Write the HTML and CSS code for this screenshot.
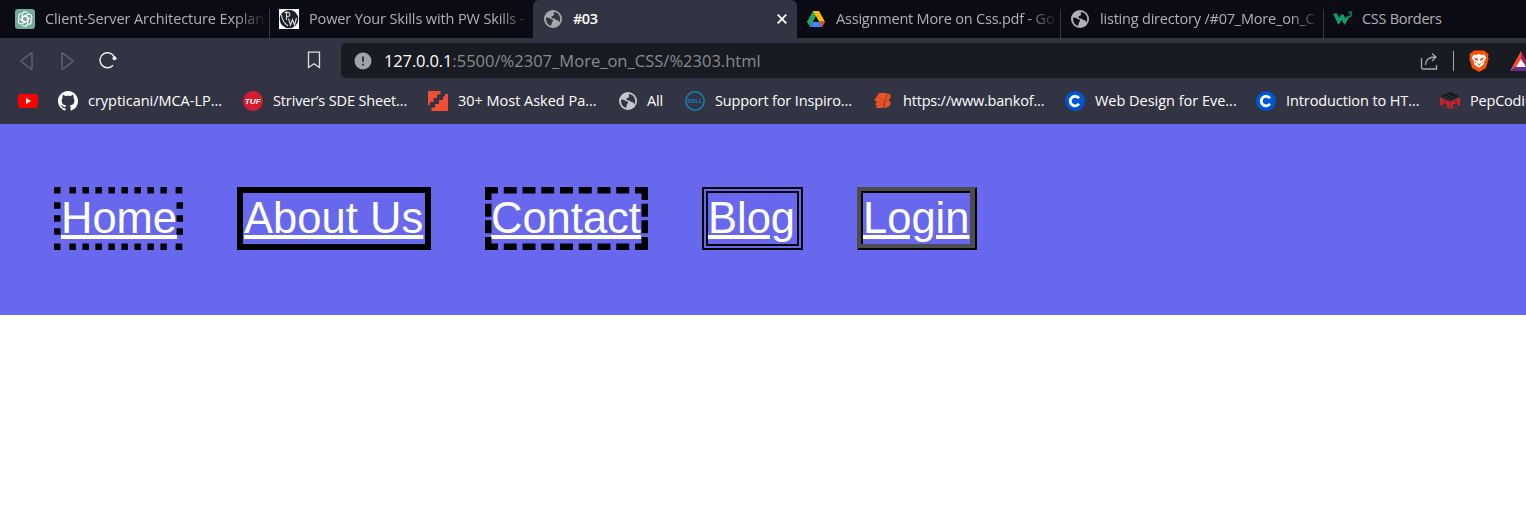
FILE: index.html
```html
<!DOCTYPE html>
<html lang="en">
<head>
<meta charset="utf-8">
<title>#03</title>
<link rel="stylesheet" href="styles.css">
</head>
<body>
<svg class="defs" width="0" height="0" aria-hidden="true">
  <symbol id="globe" viewBox="0 0 20 20"><circle cx="10" cy="10" r="9" fill="currentColor"/><path d="M3 8.500c2 .2 3.200.2 4.200 1.200.8.800 1.800.3 2.500 1 .7.800 0 1.600-.5 2.200-.6.700-.3 2-1.200 3.900C5 16 2.800 13.500 3 8.500zM11 3c3.500.2 6.200 3.200 6.200 7 0 1.500-.4 2.500-.9 3.400-.6-1.600-1.300-2.400-2.800-2.400-1.200 0-1.100-1.500-2.300-1.500-1.500 0-2.800-.3-2.800-1.500 0-1.400 1.500-1 2.300-1.600.9-.8-.5-1.500.3-3.400z" fill="var(--hole)"/></symbol>
  <symbol id="coursera" viewBox="0 0 20 20"><circle cx="10" cy="10" r="10" fill="#0056d2"/><path d="M14 7.300A4.800 4.800 0 1 0 14 12.800" fill="none" stroke="#fff" stroke-width="2.800"/></symbol>
</svg>
<header class="browser">
  <div class="tabs">
    <div class="tab">
      <svg class="icon" viewBox="0 0 20 20"><rect width="20" height="20" rx="3" fill="#74aa9c"/><g fill="none" stroke="#fff" stroke-width="1.100"><path id="petal" d="M7.300 9V5.600a3 3 0 0 1 5.600-1.300M7.300 8.500l3-1.700 3.500 2"/><use href="#petal" transform="rotate(60 10 10)"/><use href="#petal" transform="rotate(120 10 10)"/><use href="#petal" transform="rotate(180 10 10)"/><use href="#petal" transform="rotate(240 10 10)"/><use href="#petal" transform="rotate(300 10 10)"/></g></svg>
      <span class="title fade">Client-Server Architecture Explan</span>
    </div>
    <div class="tab second">
      <svg class="icon" viewBox="0 0 20 20"><path fill="#fff" d="M0 0h20v20H0z"/><circle cx="10" cy="10" r="9.300" fill="#1b2225"/><path d="M7.500 11V3.500M5.500 3.600c6-2 7.500 4.200 2 4.200M2.500 6c.5 5 3 8.500 6.500 11M9.500 9.500l2 6.500 2-5.500 2 5.500 2-7" fill="none" stroke="#d8dadb" stroke-width="1.100"/></svg>
      <span class="title fade">Power Your Skills with PW Skills -</span>
    </div>
    <div class="tab active">
      <svg class="icon"><use href="#globe"/></svg>
      <span class="title">#03</span>
      <svg class="close" viewBox="0 0 10 10"><path d="m.7.700 8.600 8.600m0-8.600L.7 9.300" stroke="#fff" stroke-width="1.800"/></svg>
    </div>
    <div class="tab fourth">
      <svg class="icon" viewBox="0 0 20 20"><path d="M7 2h6L4 18l-3-5.200z" fill="#22a565"/><path d="M7 2h6l6 10.800h-6z" fill="#ffba00"/><path d="M7 12.800h12L16 18H4z" fill="#4285f4"/><path d="M13 12.800h6L16 18z" fill="#ea4335"/><path d="m10 7.500 3 5.300H7z" fill="#0b0b15"/></svg>
      <span class="title fade">Assignment More on Css.pdf - Go</span>
    </div>
    <div class="tab">
      <svg class="icon"><use href="#globe"/></svg>
      <span class="title fade">listing directory /#07_More_on_C</span>
    </div>
    <div class="tab w3">
      <svg class="icon" viewBox="0 0 20 20"><path d="M0 4.500h4l2.200 4.800L8 5.500h2.500l2 4 1-2h3L11.600 16 8.700 10.800 5.500 16z" fill="#0f9d67"/><path d="M15.500 3h3l-1.500 2c2 0 2 2.500-.2 2.500-.8 0-1.200-.2-1.500-.6" fill="none" stroke="#0f9d67" stroke-width="1.100"/></svg>
      <span class="title">CSS Borders</span>
    </div>
  </div>
  <div class="toolbar">
    <svg class="back" viewBox="0 0 14 18"><path d="M12 1.500v15c0 .6-.5.700-1 .4L1.500 9.700c-.5-.4-.5-.8 0-1.200L11 1.200c.5-.4 1-.3 1 .3z"/></svg>
    <svg class="forward" viewBox="0 0 14 18"><path d="M2 1.500v15c0 .6.5.700 1 .4l9.500-7.200c.5-.4.5-.8 0-1.200L3 1.200c-.5-.4-1-.3-1 .3z"/></svg>
    <svg class="reload" viewBox="0 0 18 18"><path d="M14.100 14.200A7.500 7.500 0 1 1 15.500 6.500" fill="none" stroke="#f1f1f4" stroke-width="1.400"/><circle cx="15.500" cy="7.200" r="2" fill="#f1f1f4"/></svg>
    <svg class="mark" viewBox="0 0 14 18"><path d="M1.500 1.200h11v15.300L7 12.700l-5.500 3.800z" fill="none" stroke="#e0e0e4" stroke-width="1.300"/></svg>
    <div class="address">
      <svg class="info" viewBox="0 0 18 18"><circle cx="9" cy="9" r="8.500" fill="#a1a3ab"/><path d="M9 4.500v5.300M9 11.700v1.800" stroke="#181b21" stroke-width="1.600"/></svg>
      <span class="url"><b>127.0.0.1</b>:5500/%2307_More_on_CSS/%2303.html</span>
      <svg class="share" viewBox="0 0 18 18"><path d="M1.500 6v9.500q0 1.500 1.500 1.500h13.500v-4M5.500 13c0-5 3-8 10-8M12 1.500 16 5l-4 4" fill="none" stroke="#a8a9ae" stroke-width="1.300"/></svg>
      <i class="divider"></i>
      <svg class="lion" viewBox="0 0 20 22"><path d="m5 .5-3 2.300-1.700 2 .9 2L.3 8.500 3 18l7 4 7-4 2.700-9.500-.9-1.700.9-2-1.700-2L15 .5z" fill="#fb5007"/><path d="m5 4.500 2.500.5L10 4l2.500 1 2.500-.5 2.300 3.300-2.500 4.200.4 2L10 18l-5.200-4 .4-2-2.500-4.200z" fill="#fff"/><path d="m5 7.500 3.500.7.500 3L6 9.500zm10 0-3.500.7-.5 3 3-1.700zM7.500 13l2.500 1 2.500-1-2.500 2.500zM6.200 11l1 2-1 .5zm7.600 0-1 2 1 .5z" fill="#fb5007"/></svg>
      <svg class="bat" viewBox="0 0 22 20"><path d="M11 0 0 20l11-7z" fill="#ff4724"/><path d="M11 0v13l11 7z" fill="#9e1f63"/><path d="m0 20 6-4.500h10l6 4.500z" fill="#662d91"/><path d="m11 8 5 8H6z" fill="#fff"/></svg>
    </div>
  </div>
  <div class="bookmarks">
    <div class="bookmark"><svg class="icon" viewBox="0 0 20 20"><rect y="3" width="20" height="14" rx="3" fill="#f00"/><path d="m8 7 5 3-5 3z" fill="#fff"/></svg></div>
    <div class="bookmark b1"><svg class="icon" viewBox="0 0 16 16"><path fill="#fff" d="M8 0C3.580 0 0 3.580 0 8c0 3.540 2.290 6.530 5.470 7.590.4.070.55-.17.55-.38 0-.19-.01-.82-.01-1.490-2.010.37-2.530-.49-2.690-.94-.09-.23-.48-.94-.82-1.130-.28-.15-.68-.52-.01-.53.63-.01 1.080.58 1.230.82.72 1.210 1.870.87 2.330.66.070-.52.28-.87.51-1.070-1.780-.2-3.640-.89-3.640-3.950 0-.87.31-1.590.82-2.150-.08-.2-.36-1.020.08-2.120 0 0 .67-.21 2.200.82.64-.18 1.320-.27 2-.27s1.360.09 2 .27c1.530-1.040 2.200-.82 2.200-.82.44 1.100.16 1.920.08 2.120.51.56.82 1.270.82 2.150 0 3.070-1.870 3.750-3.650 3.950.29.25.54.73.54 1.480 0 1.070-.01 1.930-.01 2.200 0 .21.15.46.55.38A8.010 8.010 0 0 0 16 8c0-4.420-3.580-8-8-8z"/></svg><span>crypticani/MCA-LP...</span></div>
    <div class="bookmark b2"><svg class="icon" viewBox="0 0 20 20"><circle cx="10" cy="10" r="10" fill="#d41c32"/><text class="tuf" x="1.800" y="12.600" textLength="16" lengthAdjust="spacingAndGlyphs">TUF</text></svg><span>Striver’s SDE Sheet...</span></div>
    <div class="bookmark b3"><svg class="icon" viewBox="0 0 20 20"><path d="M0 0h12.500v3.500H9V7H5.500v4H2v3H0zM20 3v17H3.500v-3.500H7V13h4V9h4V5.500h2V3z" fill="#f34e35"/></svg><span>30+ Most Asked Pa...</span></div>
    <div class="bookmark b4"><svg class="icon"><use href="#globe"/></svg><span>All</span></div>
    <div class="bookmark b5"><svg class="icon" viewBox="0 0 20 20"><circle cx="10" cy="10" r="9.200" fill="none" stroke="#1282bd" stroke-width="1.500"/><text class="dell" x="2.500" y="12.200" textLength="15" lengthAdjust="spacingAndGlyphs">DELL</text></svg><span>Support for Inspiro...</span></div>
    <div class="bookmark b6"><svg class="icon" viewBox="0 0 20 20"><path d="M6 2h8L10 17H3l1-3H2l2-4H1zM14 3c4-1 5 3 1.500 6.500C20 11 17 17 11 17z" fill="#e85424"/><path d="m6 6 5 5m-6-1 4 4m5-11-4 14m4-7 3-2" stroke="#b8442b" stroke-width=".8" fill="none"/></svg><span>https://www.bankof...</span></div>
    <div class="bookmark b7"><svg class="icon"><use href="#coursera"/></svg><span>Web Design for Eve...</span></div>
    <div class="bookmark b8"><svg class="icon"><use href="#coursera"/></svg><span>Introduction to HT...</span></div>
    <div class="bookmark b9"><svg class="icon" viewBox="0 0 20 20"><path d="m10 1 9 4-9 4.500L1 5z" fill="#17171b"/><path d="m0 6.500 9.500 4V18L7 17v-3.500L2.500 12v3L0 14zM20 6.500l-9.500 4V18l2.500-1v-3.500l4.500-1.500v3l2.500-1z" fill="#d52027"/><path d="m3 9.500 3.500 1.500M17 9.500 13.500 11" stroke="#323443" stroke-width="1.200"/><path d="m4 5 7 3M7 3.500l7 3M3 16l3 1.500m11-1.500-3 1.500" stroke="#45504d" stroke-width=".7" fill="none"/></svg><span>PepCoding</span></div>
  </div>
</header>
<nav class="nav">
  <a class="link home" href="#">Home<svg class="outline" viewBox="0 0 129 63"><path d="M0 3.250h6.500m8.900 0h6.500m6.500 0h6.500m6.500 0h6.500m6.500 0h6.500m6.500 0h6.500m6.500 0h6.500m6.500 0h6.500m6.500 0h6.500m8.700 0h6.700M0 59.750h6.500m8.900 0h6.500m6.500 0h6.500m6.500 0h6.500m6.500 0h6.500m6.500 0h6.500m6.500 0h6.500m6.500 0h6.500m6.500 0h6.500m8.700 0h6.700M3.250 15.200v6.500m0 6.500v6.500m0 6.500v6.500M125.750 15.200v6.500m0 6.500v6.500m0 6.500v6.500"/></svg></a>
  <a class="link about" href="#">About Us</a>
  <a class="link contact" href="#">Contact<svg class="outline" viewBox="0 0 163 63"><path d="M0 3.250h13m5.750 0h13m5.750 0h13m5.750 0h13m5.750 0h13m5.750 0h13m5.750 0h13m5.750 0h13m5.750 0h13M0 59.750h13m5.750 0h13m5.750 0h13m5.750 0h13m5.750 0h13m5.750 0h13m5.750 0h13m5.750 0h13m5.750 0h13M3.250 0v13m0 3.700v13m0 3.600v13m0 3.700v13M159.750 0v13m0 3.700v13m0 3.600v13m0 3.700v13"/></svg></a>
  <a class="link blog" href="#">Blog</a>
  <a class="link login" href="#">Login<svg class="outline" viewBox="0 0 120 63"><path class="dark" d="M0 0h120v63H0zM6 6v51h107V6z"/><path class="lit" d="M0 0h120l-2 2v59H2l-2 2zM4 4v53h109V4z"/></svg></a>
</nav>
</body>
</html>
```
FILE: styles.css
```css
* { box-sizing: border-box; }
body { margin: 0; background: #fff; overflow: hidden; font-family: "Open Sans", "Noto Sans", sans-serif; }
svg { display: block; flex: none; }
.defs { position: absolute; }
.browser { height: 124px; background: #323443; color: #fff; --hole: #323443; overflow: hidden; }
.icon { width: 20px; height: 20px; }

.tabs { display: flex; height: 38px; padding-left: 5px; background: #0b0b15; }
.tab { display: flex; flex: none; align-items: center; gap: 10px; width: 264px; height: 38px; padding: 0 0 0 10px; color: #b0b0b4; --hole: #0b0b15; background: linear-gradient(#3a3a42, #3a3a42) right bottom / 1px 29px no-repeat; }
.tab:first-child { width: 265px; }
.tab.second { width: 263px; padding-left: 9px; background: none; }
.tab.active { background: #323443; border-radius: 6px 6px 0 0; color: #a5a7af; --hole: #323443; }
.tab.fourth { padding-left: 9px; }
.tab:nth-child(5) { width: 263px; padding-left: 9px; }
.tab.w3 { background: none; width: 202px; padding-left: 9px; gap: 9px; }
.title { flex: 1; white-space: nowrap; font-size: 14.500px; line-height: 24px; letter-spacing: -0.200px; }
.tab:first-child .title { letter-spacing: -0.100px; }
.second .title { letter-spacing: -0.130px; }
.w3 .title { letter-spacing: -0.280px; }
.fade { -webkit-mask-image: linear-gradient(90deg, #000 190px, transparent 222px); mask-image: linear-gradient(90deg, #000 190px, transparent 222px); }
.active .title { color: #fff; font-weight: 600; letter-spacing: -0.500px; }
.close { width: 10px; height: 10px; margin-right: 10px; }

.toolbar { display: flex; align-items: center; height: 45px; padding-left: 20px; }
.back, .forward { width: 14px; height: 18px; fill: none; stroke: #666873; stroke-width: 1.300; }
.forward { margin-left: 26px; }
.reload { width: 18px; height: 18px; margin: 0 0 1px 25px; }
.mark { width: 14px; height: 18px; margin: 0 0 1px 190px; }
.address { display: flex; flex: none; align-items: center; width: 1200px; height: 35px; margin-left: 20px; padding-left: 13px; border-radius: 5px 0 0 5px; background: #181b21; }
.info { width: 18px; height: 18px; }
.url { width: 1037px; margin-left: 12px; font-size: 16.500px; letter-spacing: 0.020px; white-space: nowrap; color: #898b90; }
.url b { color: #fff; font-weight: 400; letter-spacing: -0.140px; }
.share { width: 18px; height: 18px; margin-left: -1px; }
.divider { width: 1px; height: 20px; margin: 0 15px; background: #a8a9ae; }
.lion { width: 20px; height: 22px; }
.bat { width: 22px; height: 20px; margin-left: 21px; }

.bookmarks { display: grid; grid-template-columns: 40px 185px 185px 190px 67px 188px 192px 191px 184px 120px; align-items: center; height: 36px; padding-left: 18px; }
.bookmark { display: flex; align-items: center; gap: 10px; white-space: nowrap; font-size: 14.500px; line-height: 24px; letter-spacing: -0.200px; }
.b1, .b3, .b7 { letter-spacing: -0.020px; }
.b5, .b2 { letter-spacing: -0.140px; }
.b8 { letter-spacing: -0.100px; }
.b4 { color: #c6c7cc; gap: 9px; }
.b4 span { color: #fff; }
.tuf { font: italic bold 7px "Liberation Sans", sans-serif; letter-spacing: 0; fill: #fff; }
.dell { font: bold 6px "Liberation Sans", sans-serif; letter-spacing: 0; fill: #1282bd; }

.nav { display: flex; align-items: center; gap: 54px; height: 191.400px; padding: 0 54px 2px; background: #6868ef; font: 43.500px/50px "Liberation Sans", Arial, sans-serif; }
.link { position: relative; flex: none; height: 63px; border: 6.500px solid #000; color: #fff; white-space: nowrap; text-decoration: underline; text-decoration-thickness: 4px; text-underline-offset: 2px; }
.home, .contact, .login { border-color: transparent; }
.home { width: 129px; padding-left: 1px; }
.about { width: 194px; padding-left: 1px; letter-spacing: 0.050px; }
.contact { width: 163px; }
.blog { width: 101px; border-style: double; }
.login { width: 120px; }
.outline { position: absolute; top: -6px; left: -6px; height: 63px; stroke: #000; stroke-width: 6.500; fill: none; }
.home .outline { width: 129px; }
.contact .outline { width: 163px; }
.login .outline { width: 120px; stroke: none; fill-rule: evenodd; }
.dark { fill: #000; }
.lit { fill: #4d4d4d; }
```
